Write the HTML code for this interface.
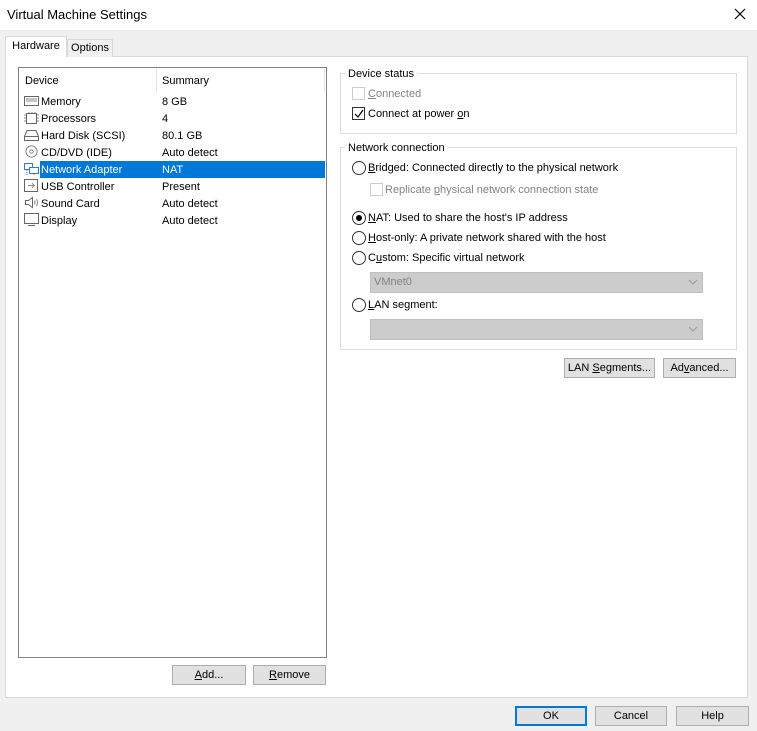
<!DOCTYPE html>
<html><head><style>
*{margin:0;padding:0;box-sizing:border-box}
body{width:757px;height:731px;background:#f0f0f0;font-family:"Liberation Sans",sans-serif;font-size:11px;color:#000;position:relative;overflow:hidden}
.a{position:absolute;white-space:nowrap}
.btn{position:absolute;background:#e1e1e1;border:1px solid #adadad;text-align:center;line-height:18px;font-size:11px;white-space:nowrap}
.grp{position:absolute;border:1px solid #dcdcdc}
.lbl{position:absolute;background:#fff;padding:0 3px;line-height:14px}
.cb{position:absolute;width:13px;height:13px;border:1px solid #333;background:#fff}
.rd{position:absolute;width:14px;height:14px;border:1px solid #333;border-radius:50%;background:#fff}
.combo{position:absolute;background:#cccccc;border:1px solid #bfbfbf;color:#838383;padding-left:3px;line-height:19px}
u{text-decoration:underline}
.ic{position:absolute;left:24px;width:15px;height:13px}
</style></head><body>
<div class="a" style="left:0;top:0;width:757px;height:30px;background:#fff"></div>
<div class="a" style="left:7px;top:7px;font-size:13px">Virtual Machine Settings</div>
<svg class="a" style="left:734px;top:8px" width="12" height="12"><path d="M1 1L11 11M11 1L1 11" stroke="#000" stroke-width="1.2"/></svg>

<div class="a" style="left:5px;top:56px;width:743px;height:642px;background:#fff;border:1px solid #d9d9d9"></div>
<div class="a" style="left:67px;top:39px;width:46px;height:18px;background:#f0f0f0;border:1px solid #d9d9d9;border-bottom:none;line-height:17px;text-align:center">Options</div>
<div class="a" style="left:5px;top:36px;width:62px;height:21px;background:#fff;border:1px solid #d9d9d9;border-bottom:none;line-height:18px;text-align:center">Hardware</div>

<div class="a" style="left:18px;top:67px;width:309px;height:591px;border:1px solid #828282;background:#fff"></div>
<div class="a" style="left:156px;top:69px;width:1px;height:24px;background:#e5e5e5"></div>
<div class="a" style="left:324px;top:69px;width:1px;height:24px;background:#e5e5e5"></div>
<div class="a" style="left:25px;top:75px">Device</div>
<div class="a" style="left:162px;top:75px">Summary</div>
<div class="a" style="left:40px;top:161px;width:285px;height:17px;background:#0078d7"></div>

<svg class="ic" style="top:95px" viewBox="0 0 15 13"><rect x="0.5" y="1.5" width="14" height="9" fill="none" stroke="#666"/><path d="M2 4h11M2 6h11" stroke="#888"/></svg>
<svg class="ic" style="top:112px" viewBox="0 0 15 13"><rect x="2.5" y="1.5" width="10" height="10" fill="none" stroke="#666"/><path d="M0 3h2M0 6h2M0 9h2M13 3h2M13 6h2M13 9h2M5 0v1M8 0v1M11 0v1" stroke="#888"/></svg>
<svg class="ic" style="top:129px" viewBox="0 0 15 13"><path d="M0.5 11.5V7.5L3 1.5H12L14.5 7.5V11.5Z M0.5 7.5H14.5" fill="none" stroke="#666"/></svg>
<svg class="ic" style="top:145px" viewBox="0 0 15 15"><circle cx="7.5" cy="7.5" r="6.5" fill="none" stroke="#777"/><circle cx="7.5" cy="7.5" r="2" fill="none" stroke="#777"/></svg>
<svg class="ic" style="top:163px" viewBox="0 0 15 13"><rect x="0.5" y="0.5" width="8" height="6" fill="none" stroke="#3a7bbf"/><rect x="5.5" y="4.5" width="9" height="6" fill="#fff" stroke="#3a7bbf"/><path d="M10 11v2M3 7v5" stroke="#3a7bbf" stroke-dasharray="1 1"/></svg>
<svg class="ic" style="top:179px" viewBox="0 0 15 13"><rect x="0.5" y="0.5" width="13" height="12" fill="none" stroke="#666"/><path d="M4 6.5h7M8 4l2 2.5L8 9" fill="none" stroke="#888"/></svg>
<svg class="ic" style="top:196px" viewBox="0 0 15 13"><path d="M1.5 4.5h3l4-3v10l-4-3h-3z" fill="none" stroke="#666"/><path d="M10.5 4.5q1 2 0 4M12.5 3q2 3.5 0 7" fill="none" stroke="#888"/></svg>
<svg class="ic" style="top:213px" viewBox="0 0 15 13"><rect x="0.5" y="0.5" width="14" height="10" fill="none" stroke="#666"/><path d="M4 12.5h7" stroke="#666"/></svg>

<div class="a" style="left:41px;top:96px">Memory</div><div class="a" style="left:162px;top:96px">8 GB</div>
<div class="a" style="left:41px;top:113px">Processors</div><div class="a" style="left:162px;top:113px">4</div>
<div class="a" style="left:41px;top:130px">Hard Disk (SCSI)</div><div class="a" style="left:162px;top:130px">80.1 GB</div>
<div class="a" style="left:41px;top:147px">CD/DVD (IDE)</div><div class="a" style="left:162px;top:147px">Auto detect</div>
<div class="a" style="left:41px;top:164px;color:#fff">Network Adapter</div><div class="a" style="left:162px;top:164px;color:#fff">NAT</div>
<div class="a" style="left:41px;top:181px">USB Controller</div><div class="a" style="left:162px;top:181px">Present</div>
<div class="a" style="left:41px;top:198px">Sound Card</div><div class="a" style="left:162px;top:198px">Auto detect</div>
<div class="a" style="left:41px;top:215px">Display</div><div class="a" style="left:162px;top:215px">Auto detect</div>

<div class="btn" style="left:172px;top:665px;width:74px;height:20px"><u>A</u>dd...</div>
<div class="btn" style="left:253px;top:665px;width:73px;height:20px"><u>R</u>emove</div>

<div class="grp" style="left:340px;top:73px;width:397px;height:61px"></div>
<div class="lbl" style="left:345px;top:67px">Device status</div>
<div class="cb" style="left:352px;top:87px;border-color:#ccc"></div>
<div class="a" style="left:368px;top:88px;color:#838383"><u>C</u>onnected</div>
<div class="cb" style="left:352px;top:107px"></div>
<svg class="a" style="left:354px;top:109px" width="10" height="10"><path d="M1 5l3 3 5-7" fill="none" stroke="#000" stroke-width="1.2"/></svg>
<div class="a" style="left:368px;top:108px">Connect at power <u>o</u>n</div>

<div class="grp" style="left:340px;top:147px;width:397px;height:203px"></div>
<div class="lbl" style="left:345px;top:141px">Network connection</div>
<div class="rd" style="left:352px;top:161px"></div>
<div class="a" style="left:368px;top:162px"><u>B</u>ridged: Connected directly to the physical network</div>
<div class="cb" style="left:370px;top:183px;border-color:#ccc"></div>
<div class="a" style="left:385px;top:184px;color:#838383">Replicate <u>p</u>hysical network connection state</div>
<div class="rd" style="left:352px;top:211px"></div>
<div class="a" style="left:356px;top:215px;width:6px;height:6px;border-radius:50%;background:#000"></div>
<div class="a" style="left:368px;top:212px"><u>N</u>AT: Used to share the host's IP address</div>
<div class="rd" style="left:352px;top:231px"></div>
<div class="a" style="left:368px;top:232px"><u>H</u>ost-only: A private network shared with the host</div>
<div class="rd" style="left:352px;top:251px"></div>
<div class="a" style="left:368px;top:252px">C<u>u</u>stom: Specific virtual network</div>
<div class="combo" style="left:370px;top:272px;width:333px;height:21px">VMnet0</div>
<svg class="a" style="left:688px;top:279px" width="10" height="6"><path d="M1 1l4 4 4-4" fill="none" stroke="#999"/></svg>
<div class="rd" style="left:352px;top:298px"></div>
<div class="a" style="left:368px;top:299px"><u>L</u>AN segment:</div>
<div class="combo" style="left:370px;top:319px;width:333px;height:21px"></div>
<svg class="a" style="left:688px;top:326px" width="10" height="6"><path d="M1 1l4 4 4-4" fill="none" stroke="#999"/></svg>

<div class="btn" style="left:564px;top:358px;width:91px;height:20px">LAN <u>S</u>egments...</div>
<div class="btn" style="left:663px;top:358px;width:73px;height:20px">Ad<u>v</u>anced...</div>

<div class="btn" style="left:515px;top:706px;width:72px;height:20px;border:2px solid #0078d7;line-height:16px">OK</div>
<div class="btn" style="left:595px;top:706px;width:72px;height:20px">Cancel</div>
<div class="btn" style="left:676px;top:706px;width:73px;height:20px">Help</div>
</body></html>
